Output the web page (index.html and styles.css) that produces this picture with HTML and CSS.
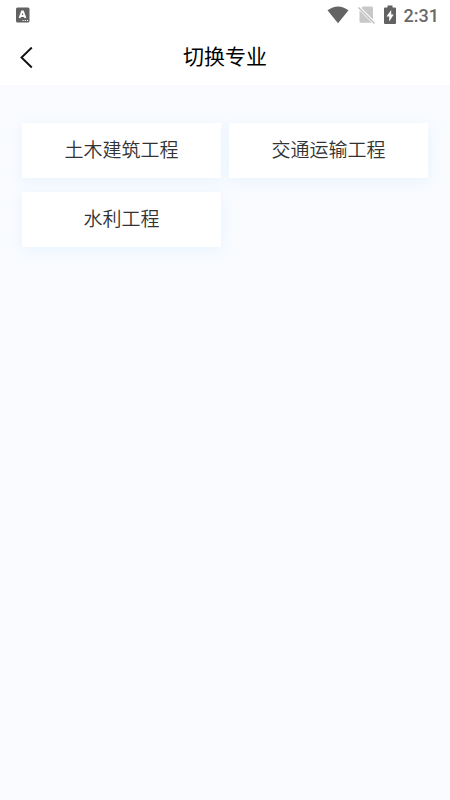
FILE: index.html
```html
<!DOCTYPE html>
<html lang="zh-CN">
<head>
<meta charset="utf-8">
<meta name="viewport" content="width=device-width, initial-scale=1">
<title>切换专业</title>
<link rel="stylesheet" href="styles.css">
</head>
<body>
<header class="top">
  <div class="status">
    <svg width="14" height="16" viewBox="0 0 14 16" aria-hidden="true"><rect x="0" y="0.500" width="13.500" height="15" rx="1.500" fill="#626262"/><path d="M3.600 11 6 4.500h1l2.400 6.500M4.600 9h3.800" fill="none" stroke="#fff" stroke-width="1.900"/><path d="M6.500 13.500h1.200M8.700 13.500h1.200M10.900 13.500h1.200" stroke="#fff"/></svg>
    <div class="status-right">
      <svg width="22" height="18" viewBox="0 0 22 18" aria-hidden="true"><path d="M0.500 4.300Q11-3.500 21.500 4.300L11 17.300Z" fill="#646464"/></svg>
      <svg width="19" height="20" viewBox="0 0 19 20" aria-hidden="true"><path d="M6 1.500h8.500q1.500 0 1.500 1.500v11.500L4.500 3ZM2.500 5.500l12.300 12.300H4q-1.500 0-1.500-1.500Z" fill="#c8c8c8"/><path d="M1.500 2.500l16 16" stroke="#c0c0c0" stroke-width="1.500"/></svg>
      <svg width="12" height="20" viewBox="0 0 12 20" aria-hidden="true"><path d="M3.500 0.500h5v2H11q1 0 1 1V18q0 1-1 1H1q-1 0-1-1V3.500q0-1 1-1h2.500Z" fill="#626262"/><path d="M7.200 5 2.500 11.500h2.700V16.500L9.700 9.500H7.200Z" fill="#fff"/></svg>
      <time class="clock">2:31</time>
    </div>
  </div>
  <div class="nav">
    <button class="back" type="button" aria-label="返回"><svg width="14" height="22" viewBox="0 0 14 22" aria-hidden="true"><path d="M11.800 0.500 1.500 10.500l10.300 10" fill="none" stroke="#111" stroke-width="1.900"/></svg></button>
    <h1 class="title">切换专业</h1>
  </div>
</header>
<main class="grid">
  <button class="card" type="button">土木建筑工程</button>
  <button class="card" type="button">交通运输工程</button>
  <button class="card" type="button">水利工程</button>
</main>
</body>
</html>
```

FILE: styles.css
```css
body {
  margin: 0;
  min-height: 100vh;
  background: #f9fbff;
  font-family: "Noto Sans CJK SC", sans-serif;
}
.top { background: #fff; }
.status {
  display: flex;
  align-items: center;
  justify-content: space-between;
  height: 30px;
  padding: 0 11px 0 16px;
}
.status-right {
  display: flex;
  align-items: center;
  gap: 8px;
}
.clock {
  font: 500 18px/30px Roboto, sans-serif;
  padding-top: 1px;
  color: #686868;
}
.nav {
  display: grid;
  grid-template-columns: 54px 1fr 54px;
  align-items: center;
  height: 55px;
}
.back {
  display: flex;
  padding: 8px 20px;
  border: 0;
  background: none;
}
.title {
  margin: 0;
  padding-bottom: 5px;
  font-size: 21px;
  line-height: 30px;
  font-weight: 400;
  color: #000;
  text-align: center;
}
.grid {
  display: grid;
  grid-template-columns: 1fr 1fr;
  gap: 14px 8px;
  padding: 38px 22px;
}
.card {
  height: 55px;
  padding: 0 0 4px;
  border: 0;
  background: #fff;
  box-shadow: 0 3px 14px #e8f3fc;
  font: inherit;
  font-size: 19px;
  font-weight: 350;
  color: #333;
}
```
